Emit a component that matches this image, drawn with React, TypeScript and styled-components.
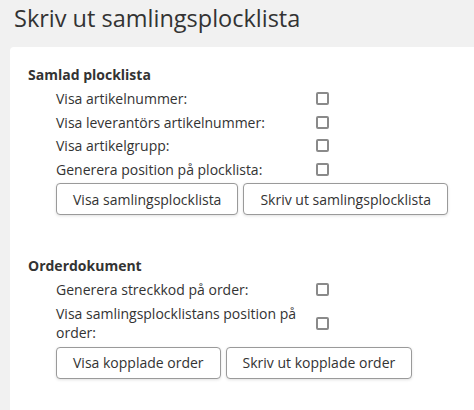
import React from 'react';
import styled, {createGlobalStyle} from 'styled-components';

const GlobalStyle = createGlobalStyle`
  html, body {
    margin: 0;
    padding: 0;
    background: #f1f1f1;
    font-family: "Open Sans", "Liberation Sans", sans-serif;
    color: #333;
    overflow: hidden;
  }
`;

const sections = [
    {
        title: 'Samlad plocklista',
        options: [
            'Visa artikelnummer:',
            'Visa leverantörs artikelnummer:',
            'Visa artikelgrupp:',
            'Generera position på plocklista:'
        ],
        buttons: ['Visa samlingsplocklista', 'Skriv ut samlingsplocklista']
    },
    {
        title: 'Orderdokument',
        options: [
            'Generera streckkod på order:',
            'Visa samlingsplocklistans position på order:'
        ],
        buttons: ['Visa kopplade order', 'Skriv ut kopplade order']
    }
];

const App = (): JSX.Element => {
    return (
        <Page>
            <GlobalStyle/>
            <PageTitle>Skriv ut samlingsplocklista</PageTitle>
            <Card>
                {sections.map(({title, options, buttons}) => (
                    <Section key={title}>
                        <SectionTitle>{title}</SectionTitle>
                        <Options>
                            {options.map((label) => (
                                <OptionRow key={label}>
                                    <Label>{label}</Label>
                                    <Checkbox type="checkbox"/>
                                </OptionRow>
                            ))}
                        </Options>
                        <Buttons>
                            {buttons.map((b) => (
                                <Button key={b}>{b}</Button>
                            ))}
                        </Buttons>
                    </Section>
                ))}
            </Card>
        </Page>
    );
};

const Page = styled.div`
  width: 474px;
  height: 410px;
  padding: 0 0 0 10px;
  box-sizing: border-box;
  overflow: hidden;
`;

const PageTitle = styled.h1`
  margin: 0;
  padding: 2.5px 0 0 4px;
  height: 44px;
  box-sizing: border-box;
  font-size: 23.5px;
  font-weight: 400;
  color: #333;
  line-height: 30px;
`;

const Card = styled.div`
  margin-top: 3px;
  background: #fff;
  border-radius: 4px 0 0 4px;
  padding: 18px 0 30px 18px;
  min-height: 400px;
  box-sizing: border-box;
  margin-right: -10px;
`;

const Section = styled.section`
  margin-bottom: 41px;
`;

const SectionTitle = styled.h2`
  margin: 0 0 2px;
  font-size: 14px;
  font-weight: 700;
  line-height: 20px;
  color: #333;
`;

const Options = styled.div`
  padding-left: 28px;
  display: flex;
  flex-direction: column;
`;

const OptionRow = styled.div`
  display: flex;
  align-items: center;
  padding: 2px 0;
`;

const Label = styled.span`
  width: 250px;
  font-size: 14px;
  line-height: 19.5px;
  color: #333;
`;

const Checkbox = styled.input`
  appearance: none;
  margin: 0 0 0 10px;
  width: 13px;
  height: 13px;
  border: 2px solid #8a8a8a;
  border-radius: 2px;
  box-sizing: border-box;
  background: #fff;
`;

const Buttons = styled.div`
  display: flex;
  gap: 5px;
  padding-left: 28px;
  margin-top: 2px;
`;

const Button = styled.button`
  height: 32px;
  padding: 0 16px;
  background: #fff;
  border: 1px solid #9a9a9a;
  border-radius: 4px;
  box-shadow: 0 1px 3px rgba(0, 0, 0, 0.12);
  font-family: "Open Sans", "Liberation Sans", sans-serif;
  font-size: 14px;
  color: #333;
`;

export default App;
